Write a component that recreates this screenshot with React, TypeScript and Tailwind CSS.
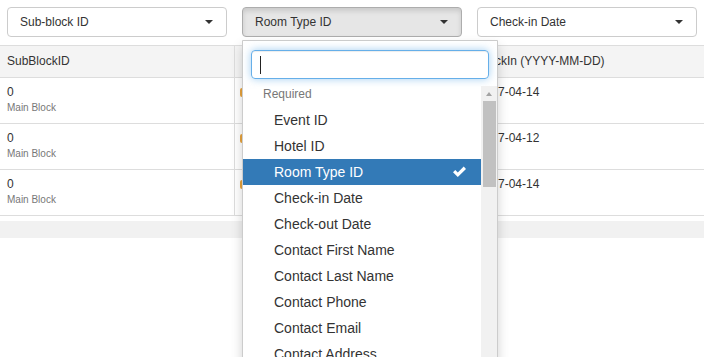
import React from "react";

const font = "font-['Liberation_Sans',Arial,Helvetica,sans-serif]";

function Select({ label, active }: { label: string; active?: boolean }) {
  return (
    <div
      className={
        "flex h-[30px] w-[220px] items-center justify-between rounded-[4px] border pl-[12px] pr-[13px] text-[12px] text-[#333] " +
        (active
          ? "border-[#adadad] bg-[#e6e6e6] shadow-[inset_0_3px_5px_rgba(0,0,0,0.125)]"
          : "border-[#ccc] bg-white")
      }
    >
      <span className="leading-[17px]">{label}</span>
      <span className="h-0 w-0 border-x-[4px] border-t-[4px] border-x-transparent border-t-[#333]" />
    </div>
  );
}

const rows = [
  { id: "0", date: "2017-04-14" },
  { id: "0", date: "2017-04-12" },
  { id: "0", date: "2017-04-14" },
];

const options = [
  "Event ID",
  "Hotel ID",
  "Room Type ID",
  "Check-in Date",
  "Check-out Date",
  "Contact First Name",
  "Contact Last Name",
  "Contact Phone",
  "Contact Email",
  "Contact Address",
];

export default function App() {
  return (
    <div className={"relative h-[357px] w-[704px] overflow-hidden bg-white text-[#333] " + font}>
      <div className="flex gap-[15px] pl-[7px] pt-[7px]">
        <Select label="Sub-block ID" />
        <Select label="Room Type ID" active />
        <Select label="Check-in Date" />
      </div>

      <div className="mt-[8px]">
        <div className="flex h-[33px] border-y border-[#ddd] bg-[#f4f4f4] text-[12px] leading-[17px]">
          <div className="flex w-[235px] items-center border-r border-[#ddd] pl-[7px]">SubBlockID</div>
          <div className="flex w-[231px] items-center pl-[7px]"></div>
          <div className="flex flex-1 items-center pl-[7px]">CheckIn (YYYY-MM-DD)</div>
        </div>
        {rows.map((r, i) => (
          <div key={i} className="flex h-[46px] border-b border-[#ddd] text-[12px]">
            <div className="flex w-[235px] flex-col border-r border-[#ddd] pl-[7px] pt-[6px]">
              <span className="leading-[17px]">{r.id}</span>
              <span className="text-[10px] leading-[14px] text-[#777]">Main Block</span>
            </div>
            <div className="w-[231px] pl-[5px] pt-[10px]">
              <span className="block h-[9px] w-[7px] rounded-[2px] bg-[#e8a33d]" />
            </div>
            <div className="flex-1 pl-[12px] pt-[6px] leading-[17px]">{r.date}</div>
          </div>
        ))}
        <div className="mt-[5px] h-[17px] bg-[#f1f1f1]" />
      </div>

      <div className="absolute left-[242px] top-[40px] w-[256px] rounded-b-[4px] border border-[#ccc] bg-white shadow-[0_6px_12px_rgba(0,0,0,0.175)]">
        <div className="px-[8px] pt-[9px]">
          <div className="flex h-[29px] items-center rounded-[4px] border border-[#66afe9] pl-[8px] shadow-[inset_0_1px_1px_rgba(0,0,0,0.075),0_0_8px_rgba(102,175,233,0.6)]">
            <span className="block h-[18px] w-[1px] bg-[#222]" />
          </div>
        </div>
        <div className="mt-[7px] flex h-[300px]">
          <div className="w-[238px]">
            <div className="h-[21px] pl-[20px] text-[12px] leading-[17px] text-[#777]">Required</div>
            {options.map((o) => {
              const sel = o === "Room Type ID";
              return (
                <div
                  key={o}
                  className={
                    "flex h-[26px] items-center justify-between pl-[31px] pr-[14px] text-[14px] leading-[26px] " +
                    (sel ? "bg-[#337ab7] text-white" : "text-[#333]")
                  }
                >
                  <span>{o}</span>
                  {sel && (
                    <svg width="15" height="12" viewBox="0 0 15 12">
                      <path d="M1 6.3 L3.3 4 L5.8 6.5 L11.7 0.6 L14 2.9 L5.8 11.1 Z" fill="white" />
                    </svg>
                  )}
                </div>
              );
            })}
          </div>
          <div className="flex w-[16px] flex-col bg-[#f1f1f1]">
            <div className="flex h-[15px] items-center justify-center">
              <span className="h-0 w-0 border-x-[3.5px] border-b-[4px] border-x-transparent border-b-[#a3a3a3]" />
            </div>
            <div className="ml-[2px] mr-[1px] h-[86px] bg-[#c1c1c1]" />
          </div>
        </div>
      </div>
    </div>
  );
}
